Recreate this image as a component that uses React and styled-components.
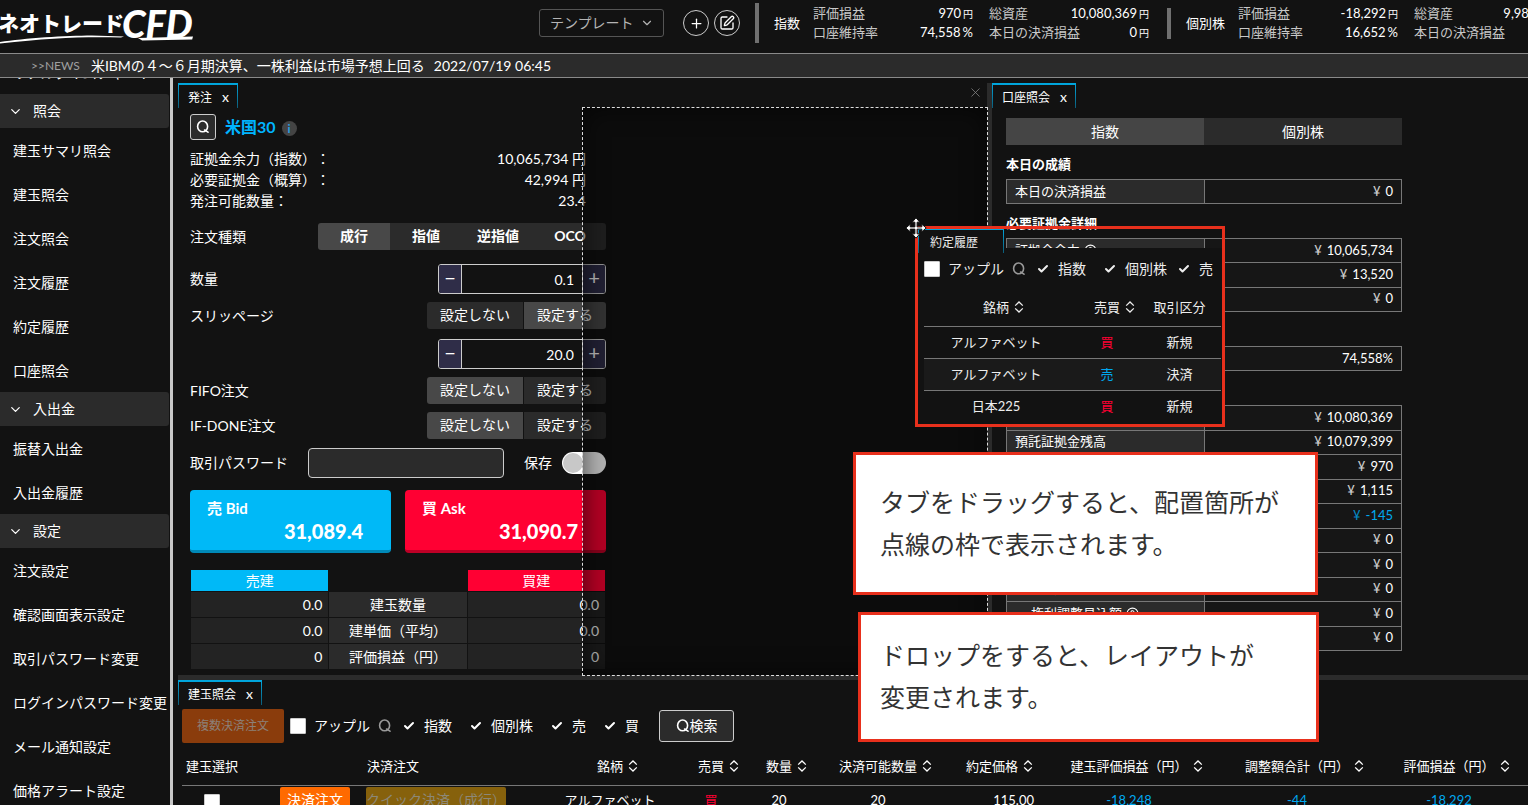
import React from 'react';
import styled, { createGlobalStyle, css } from 'styled-components';
import { Check, ChevronDown, CircleHelp, Plus, SquarePen, X } from 'lucide-react';

const menu = [
    { items: ['リアルタイムチャート'] },
    { title: '照会', items: ['建玉サマリ照会', '建玉照会', '注文照会', '注文履歴', '約定履歴', '口座照会'] },
    { title: '入出金', items: ['振替入出金', '入出金履歴'] },
    {
        title: '設定',
        items: ['注文設定', '確認画面表示設定', '取引パスワード変更', 'ログインパスワード変更', 'メール通知設定', '価格アラート設定'],
    },
];

const accounts = [
    {
        name: '指数',
        bar: 40,
        figures: [
            [['評価損益', '970', '円'], ['口座維持率', '74,558', '%']],
            [['総資産', '10,080,369', '円'], ['本日の決済損益', '0', '円']],
        ],
    },
    {
        name: '個別株',
        bar: 31,
        figures: [
            [['評価損益', '-18,292', '円'], ['口座維持率', '16,652', '%']],
            [['総資産', '9,981,708', '円'], ['本日の決済損益', '0', '円']],
        ],
    },
];

const summary = [
    ['証拠金余力（指数）：', '10,065,734 円'],
    ['必要証拠金（概算）：', '42,994 円'],
    ['発注可能数量：', '23.4'],
];

const holdings = [
    ['0.0', '建玉数量', '0.0'],
    ['0.0', '建単価（平均）', '0.0'],
    ['0', '評価損益（円）', '0'],
];

const accountSections = [
    { title: '本日の成績', height: 25, rows: [{ label: '本日の決済損益', value: '0' }] },
    {
        title: '必要証拠金詳細',
        height: 74,
        rows: [
            { label: '証拠金余力', value: '10,065,734', help: true },
            { label: '必要証拠金', value: '13,520' },
            { label: '発注証拠金', value: '0' },
        ],
    },
    { title: '口座状況', height: 25, rows: [{ label: '口座維持率', value: '74,558%', plain: true }] },
    {
        title: '資産詳細',
        height: 246,
        rows: [
            { label: '総資産', value: '10,080,369' },
            { label: '預託証拠金残高', value: '10,079,399' },
            { label: '評価損益', value: '970' },
            { label: '建玉評価損益', value: '1,115', sub: true },
            { label: '調整額合計', value: '-145', sub: true, minus: true },
            { label: '入金予定額', value: '0' },
            { label: '出金予定額', value: '0' },
            { label: '振替予定額', value: '0' },
            { label: '権利調整見込額', value: '0', sub: true, help: true },
            { label: 'その他', value: '0' },
        ],
    },
];

const positionColumns = [
    { name: '建玉選択', width: 60 },
    { name: '決済注文', width: 302 },
    { name: '銘柄', width: 132, sort: true },
    { name: '売買', width: 70, sort: true },
    { name: '数量', width: 66, sort: true },
    { name: '決済可能数量', width: 132, sort: true },
    { name: '約定価格', width: 96, sort: true },
    { name: '建玉評価損益（円）', width: 178, sort: true },
    { name: '調整額合計（円）', width: 158, sort: true },
    { name: '評価損益（円）', sort: true },
];

const history = [
    ['アルファベット', '買', '新規'],
    ['アルファベット', '売', '決済'],
    ['日本225', '買', '新規'],
];

const SearchIcon = ({ size = 14 }) => (
    <svg width={size} height={size} viewBox="0 0 14 14" fill="none" stroke="currentColor" strokeWidth="1.6" aria-hidden="true">
        <ellipse cx="6.6" cy="6.4" rx="5" ry="5.4" />
        <path d="M8.6 10l3.4 2.2" strokeLinecap="round" />
    </svg>
);

const SortIcon = () => (
    <SortMark width="10" height="12" viewBox="0 0 10 12" fill="none" stroke="currentColor" strokeWidth="1.3" aria-hidden="true">
        <path d="M1.2 4.6L5 1l3.8 3.6M1.2 7.4L5 11l3.8-3.6" />
    </SortMark>
);

const Logo = () => (
    <LogoLink href="#" aria-label="ネオトレードCFD">
        <svg width="200" height="46" viewBox="0 0 200 46" fill="#fff">
            <text x="-2" y="31" fontFamily='"Noto Sans CJK JP", sans-serif' fontWeight="900" fontSize="21">ネオトレード</text>
            <text x="122" y="38" fontFamily="Lato, sans-serif" fontWeight="900" fontStyle="italic" fontSize="38">CFD</text>
            <path d="M0 42C24 38 66 35.5 92 35.4l32 1-3 1.2C86 36.4 50 38 0 43.4z" />
            <path d="M138 38l55-1.4-.8 2.8-50 1z" />
        </svg>
    </LogoLink>
);

const MoveCursor = () => (
    <CursorMark width="22" height="22" viewBox="0 0 22 22" aria-hidden="true">
        <path
            d="M11 .8l3.8 4.4h-2.7v4.7h4.7V7.2l4.4 3.8-4.4 3.8v-2.7h-4.7v4.7h2.7L11 21.2l-3.8-4.4h2.7v-4.7H5.2v2.7L.8 11l4.4-3.8v2.7h4.7V5.2H7.2z"
            fill="#fff"
            stroke="#111"
        />
    </CursorMark>
);

const PanelTab = ({ title }) => (
    <Tabs>
        <Tab>
            {title}
            <TabClose aria-label={`${title}を閉じる`}>x</TabClose>
        </Tab>
    </Tabs>
);

const Filter = ({ label, gap }) => (
    <FilterLabel $gap={gap}>
        <HiddenCheck type="checkbox" defaultChecked />
        <Check size={12} strokeWidth={4} />
        {label}
    </FilterLabel>
);

const SymbolFilter = () => (
    <>
        <SymbolLabel>
            <Box type="checkbox" />
            アップル
        </SymbolLabel>
        <IconButton aria-label="銘柄検索"><SearchIcon /></IconButton>
    </>
);

const Choice = ({ on }) => (
    <Segments $small>
        <Segment $on={!on} $width={96}>設定しない</Segment>
        <Segment $on={on} $width={82}>設定する</Segment>
    </Segments>
);

const Counter = ({ label, value }) => (
    <Stepper>
        <StepButton aria-label={`${label}を減らす`}>−</StepButton>
        <StepInput aria-label={label} defaultValue={value} />
        <StepButton aria-label={`${label}を増やす`}>+</StepButton>
    </Stepper>
);

const OrderPanel = () => (
    <Panel>
        <PanelTab title="発注" />
        <ClosePanel aria-label="閉じる"><X size={15} strokeWidth={1.2} /></ClosePanel>
        <OrderForm onSubmit={(e) => e.preventDefault()}>
            <SymbolRow>
                <SearchButton aria-label="銘柄を選ぶ"><SearchIcon /></SearchButton>
                <SymbolName>米国30</SymbolName>
                <Info>i</Info>
            </SymbolRow>
            <Summary>
                {summary.map(([label, value]) => (
                    <SummaryLine key={label}>
                        <dt>{label}</dt>
                        <dd>{value}</dd>
                    </SummaryLine>
                ))}
            </Summary>
            <FormRow $gap={12}>
                <span>注文種類</span>
                <Segments>
                    {['成行', '指値', '逆指値', 'OCO'].map((type, i) => (
                        <Segment key={type} $on={i === 0} $width={72} $bold>{type}</Segment>
                    ))}
                </Segments>
            </FormRow>
            <FormRow $gap={14}>
                <span>数量</span>
                <Counter label="数量" value="0.1" />
            </FormRow>
            <FormRow $gap={8}>
                <span>スリッページ</span>
                <Choice on />
            </FormRow>
            <FormRow $gap={10} $end>
                <Counter label="スリッページ" value="20.0" />
            </FormRow>
            <FormRow $gap={8}>
                <span>FIFO注文</span>
                <Choice />
            </FormRow>
            <FormRow $gap={8}>
                <span>IF-DONE注文</span>
                <Choice />
            </FormRow>
            <FormRow $gap={9}>
                <label htmlFor="password">取引パスワード</label>
                <PasswordInput id="password" type="password" />
                <SaveLabel>
                    保存
                    <Switch type="checkbox" role="switch" />
                </SaveLabel>
            </FormRow>
            <Prices>
                <PriceButton $color="#00b9f7" $edge="#0089b8">
                    <span>売 Bid</span>
                    <strong>31,089.4</strong>
                </PriceButton>
                <PriceButton $color="#ff0033" $edge="#bd0026">
                    <span>買 Ask</span>
                    <strong>31,090.7</strong>
                </PriceButton>
            </Prices>
            <Holdings>
                <thead>
                    <tr>
                        <HoldingHead $color="#00b9f7">売建</HoldingHead>
                        <td />
                        <HoldingHead $color="#ff0033">買建</HoldingHead>
                    </tr>
                </thead>
                <tbody>
                    {holdings.map(([sell, label, buy]) => (
                        <tr key={label}>
                            <HoldingCell>{sell}</HoldingCell>
                            <HoldingName>{label}</HoldingName>
                            <HoldingCell>{buy}</HoldingCell>
                        </tr>
                    ))}
                </tbody>
            </Holdings>
        </OrderForm>
        <DropZone />
    </Panel>
);

const AccountPanel = () => (
    <Panel>
        <PanelTab title="口座照会" />
        <AccountBody>
            <AccountTabs>
                <AccountTab $on>指数</AccountTab>
                <AccountTab>個別株</AccountTab>
            </AccountTabs>
            {accountSections.map((section) => (
                <section key={section.title}>
                    <SectionTitle>{section.title}</SectionTitle>
                    <AccountTable $height={section.height}>
                        <tbody>
                            {section.rows.map((row) => (
                                <tr key={row.label}>
                                    <AccountName $sub={row.sub}>
                                        {row.label}
                                        {row.help && <CircleHelp size={13} />}
                                    </AccountName>
                                    <AccountValue $minus={row.minus}>
                                        {!row.plain && <Yen>¥</Yen>}
                                        {row.value}
                                    </AccountValue>
                                </tr>
                            ))}
                        </tbody>
                    </AccountTable>
                </section>
            ))}
        </AccountBody>
    </Panel>
);

const PositionPanel = () => (
    <BottomPanel>
        <PanelTab title="建玉照会" />
        <Filters $height={34} $top={4}>
            <BulkButton disabled>複数決済注文</BulkButton>
            <SymbolFilter />
            <Filter label="指数" gap={11} />
            <Filter label="個別株" gap={18} />
            <Filter label="売" gap={18} />
            <Filter label="買" gap={18} />
            <FindButton><SearchIcon />検索</FindButton>
        </Filters>
        <PositionTable>
            <colgroup>
                {positionColumns.map((c) => <col key={c.name} width={c.width} />)}
            </colgroup>
            <thead>
                <tr>
                    {positionColumns.map((c) => (
                        <th key={c.name}>
                            <HeadText>{c.name}{c.sort && <SortIcon />}</HeadText>
                        </th>
                    ))}
                </tr>
            </thead>
            <tbody>
                <tr>
                    <td><Box type="checkbox" aria-label="建玉を選択" /></td>
                    <td>
                        <Actions>
                            <SettleButton>決済注文</SettleButton>
                            <QuickButton disabled>クイック決済（成行）</QuickButton>
                        </Actions>
                    </td>
                    <td>アルファベット</td>
                    <td><Side $buy>買</Side></td>
                    <td>20</td>
                    <td>20</td>
                    <RightCell>115.00</RightCell>
                    <MinusCell>-18,248</MinusCell>
                    <MinusCell>-44</MinusCell>
                    <MinusCell>-18,292</MinusCell>
                </tr>
            </tbody>
        </PositionTable>
    </BottomPanel>
);

const HistoryWindow = () => (
    <Floating>
        <MoveCursor />
        <FloatingTab>約定履歴</FloatingTab>
        <FloatingBody>
            <Filters $height={42}>
                <SymbolFilter />
                <Filter label="指数" gap={11} />
                <Filter label="個別株" gap={18} />
                <Filter label="売" gap={11} />
            </Filters>
            <HistoryTable>
                <colgroup>
                    <col width="144" />
                    <col width="78" />
                    <col />
                </colgroup>
                <thead>
                    <tr>
                        <th><HeadText>銘柄<SortIcon /></HeadText></th>
                        <th><HeadText>売買<SortIcon /></HeadText></th>
                        <th>取引区分</th>
                    </tr>
                </thead>
                <tbody>
                    {history.map(([name, side, kind], i) => (
                        <tr key={i}>
                            <td>{name}</td>
                            <td><Side $buy={side === '買'}>{side}</Side></td>
                            <td>{kind}</td>
                        </tr>
                    ))}
                </tbody>
            </HistoryTable>
        </FloatingBody>
    </Floating>
);

const App = () => (
    <>
        <GlobalStyle />
        <Page>
            <Header>
                <Logo />
                <TemplateBox>
                    <TemplateSelect aria-label="テンプレート">
                        <option>テンプレート</option>
                    </TemplateSelect>
                    <ChevronDown size={14} />
                </TemplateBox>
                <RoundButtons>
                    <RoundButton aria-label="追加"><Plus size={15} /></RoundButton>
                    <RoundButton aria-label="編集"><SquarePen size={16} /></RoundButton>
                </RoundButtons>
                {accounts.map((account) => (
                    <Account key={account.name}>
                        <AccountBar $height={account.bar} />
                        <AccountTitle>{account.name}</AccountTitle>
                        {account.figures.map((group, i) => (
                            <Figures key={i}>
                                {group.map(([label, value, unit]) => (
                                    <Figure key={label}>
                                        <dt>{label}</dt>
                                        <dd>{value}<Unit $small={unit === '円'}>{unit}</Unit></dd>
                                    </Figure>
                                ))}
                            </Figures>
                        ))}
                    </Account>
                ))}
            </Header>
            <News>
                <NewsTag>&gt;&gt;NEWS</NewsTag>
                <span>米IBMの４～６月期決算、一株利益は市場予想上回る</span>
                <time>2022/07/19 06:45</time>
            </News>
            <Main>
                <Sidebar>
                    <SidebarInner>
                        {menu.map((group) => (
                            <div key={group.items[0]}>
                                {group.title && (
                                    <MenuTitle><ChevronDown size={15} />{group.title}</MenuTitle>
                                )}
                                {group.items.map((item) => <MenuLink key={item} href="#">{item}</MenuLink>)}
                            </div>
                        ))}
                    </SidebarInner>
                </Sidebar>
                <Workspace>
                    <TopPanels>
                        <OrderPanel />
                        <Splitter />
                        <AccountPanel />
                    </TopPanels>
                    <Splitter />
                    <PositionPanel />
                </Workspace>
            </Main>
            <HistoryWindow />
            <Callout $left={853} $top={452} $width={465} $pad="26px 0 27px 24px">
                タブをドラッグすると、配置箇所が<br />点線の枠で表示されます。
            </Callout>
            <Callout $left={858} $top={612} $width={461} $pad="19px 0 21px 19px">
                ドロップをすると、レイアウトが<br />変更されます。
            </Callout>
        </Page>
    </>
);

export default App;



const GlobalStyle = createGlobalStyle`
* {
    box-sizing: border-box;
}
body {
    margin: 0;
    background: #121212;
    color: #fff;
    font-family: Lato, "Noto Sans CJK JP", sans-serif;
    font-size: 14px;
    line-height: 20px;
}
button, input, select {
    margin: 0;
    padding: 0;
    border: 0;
    background: none;
    color: inherit;
    font: inherit;
}
a {
    color: inherit;
    text-decoration: none;
}
dl, dd, h3 {
    margin: 0;
}
svg {
    flex: none;
    display: block;
}
`;
const Page = styled.div`
position: relative;
display: flex;
flex-direction: column;
height: 100vh;
overflow: hidden;
`;
const Header = styled.header`
display: flex;
align-items: center;
flex: none;
height: 53px;
padding-bottom: 7px;
overflow: hidden;
white-space: nowrap;
`;
const LogoLink = styled.a`
flex: none;
width: 539px;
`;
const TemplateBox = styled.div`
position: relative;
flex: none;
color: #b4b4b4;
svg {
    position: absolute;
    right: 10px;
    top: 7px;
    pointer-events: none;
}
`;
const TemplateSelect = styled.select`
appearance: none;
display: block;
width: 125px;
height: 28px;
padding: 0 10px;
border: 1px solid #555;
border-radius: 3px;
`;
const RoundButtons = styled.div`
display: flex;
flex: none;
gap: 5px;
margin: 0 15px 0 19px;
`;
const RoundButton = styled.button`
display: flex;
align-items: center;
justify-content: center;
width: 26px;
height: 26px;
border: 1px solid #ccc;
border-radius: 50%;
`;
const Account = styled.div`
display: flex;
align-items: center;
flex: none;
margin-right: 18px;
font-size: 13px;
`;
const AccountBar = styled.span`
width: 4px;
height: ${({ $height }) => $height}px;
background: #707070;
`;
const AccountTitle = styled.span`
margin: 0 13px 0 15px;
`;
const Figures = styled.dl`
width: 160px;
& + & {
    margin-left: 16px;
}
`;
const Figure = styled.div`
display: flex;
justify-content: space-between;
height: 19px;
line-height: 19px;
dt {
    color: #c8c8c8;
}
`;
const Unit = styled.span`
margin-left: 2px;
font-size: ${({ $small }) => ($small ? '10px' : '13px')};
line-height: 10px;
`;
const News = styled.div`
display: flex;
align-items: center;
flex: none;
height: 25px;
padding-left: 31px;
border-top: 1px solid #8a8a8a;
border-bottom: 1px solid #8a8a8a;
background: #2b2b2b;
white-space: nowrap;
time {
    margin-left: 9px;
}
`;
const NewsTag = styled.span`
margin-right: 11px;
color: #a0a0a0;
font-size: 12px;
`;
const Main = styled.div`
display: flex;
flex: 1;
min-height: 0;
`;
const Sidebar = styled.nav`
flex: none;
width: 173px;
border-right: 3px solid #c8c8c8;
overflow: hidden;
white-space: nowrap;
`;
const SidebarInner = styled.div`
margin-top: -28px;
`;
const MenuTitle = styled.div`
display: flex;
align-items: center;
gap: 10px;
height: 34px;
margin-right: 1px;
padding-left: 8px;
border-radius: 0 3px 3px 0;
background: #2b2b2b;
`;
const MenuLink = styled.a`
display: block;
padding: 2px 13px 0;
line-height: 42px;
`;
const Workspace = styled.main`
display: grid;
grid-template-rows: auto 5px minmax(0, 1fr);
flex: 1;
min-width: 0;
padding: 5px 0 0 5px;
`;
const TopPanels = styled.div`
display: grid;
grid-template-columns: minmax(0, 1fr) 5px 536px;
`;
const Splitter = styled.div`
background: #2b2b2b;
`;
const Panel = styled.section`
position: relative;
min-width: 0;
`;
const Tabs = styled.div`
display: flex;
height: 25px;
`;
const tabFrame = css`
border: 1px solid;
border-top: 2px solid;
border-bottom: 0;
border-image: linear-gradient(#00a8e0, #0c5c78) 2 1 0;
font-size: 12px;
`;
const Tab = styled.div`
display: flex;
align-items: center;
gap: 10px;
padding: 2px 8px 0 9px;
${tabFrame}
`;
const TabClose = styled.button`
padding-bottom: 2px;
font-size: 14px;
line-height: 14px;
`;
const ClosePanel = styled.button`
position: absolute;
top: 2px;
right: 4px;
color: #888;
`;
const OrderForm = styled.form`
width: 428px;
padding: 6px 0 5px 12px;
`;
const SymbolRow = styled.div`
display: flex;
align-items: center;
height: 26px;
`;
const SearchButton = styled.button`
display: flex;
align-items: center;
justify-content: center;
width: 26px;
height: 26px;
border: 1px solid #ccc;
border-radius: 3px;
background: #2b2b2b;
`;
const SymbolName = styled.strong`
margin: 0 6px 0 9px;
color: #00b4ff;
font-size: 16px;
`;
const Info = styled.span`
width: 15px;
height: 15px;
margin-top: 3px;
border-radius: 50%;
background: #444;
color: #2a9ee0;
font-size: 12px;
font-weight: 700;
line-height: 15px;
text-align: center;
`;
const Summary = styled.dl`
margin-top: 8px;
text-spacing-trim: space-all;
`;
const SummaryLine = styled.div`
display: flex;
justify-content: space-between;
padding-right: 20px;
line-height: 21px;
`;
const FormRow = styled.div`
display: flex;
align-items: center;
justify-content: ${({ $end }) => ($end ? 'flex-end' : 'space-between')};
margin-top: ${({ $gap }) => $gap}px;
`;
const Segments = styled.div`
display: flex;
gap: ${({ $small }) => ($small ? '1px' : '0')};
height: 27px;
border-radius: 3px;
overflow: hidden;
`;
const Segment = styled.button.attrs({ type: 'button' })`
width: ${({ $width }) => $width}px;
padding-bottom: 1px;
background: ${({ $on }) => ($on ? '#484848' : '#2b2b2b')};
font-weight: ${({ $bold }) => ($bold ? 700 : 400)};
`;
const Stepper = styled.div`
display: flex;
width: 168px;
height: 30px;
border: 1px solid #ccc;
border-radius: 3px;
overflow: hidden;
`;
const StepButton = styled.button.attrs({ type: 'button' })`
width: 22px;
padding-bottom: 4px;
background: #2f2d48;
font-size: 20px;
`;
const StepInput = styled.input`
flex: 1;
min-width: 0;
padding: 2px 8px 0;
border: solid #ccc;
border-width: 0 1px;
text-align: right;
`;
const PasswordInput = styled.input`
width: 196px;
height: 30px;
padding: 0 8px;
border: 1px solid #ccc;
border-radius: 4px;
background: #2b2b2b;
`;
const SaveLabel = styled.label`
display: flex;
align-items: center;
gap: 10px;
`;
const Switch = styled.input`
appearance: none;
width: 44px;
height: 22px;
padding: 1px;
border-radius: 11px;
background: #fff;
&::before {
    content: '';
    display: block;
    width: 20px;
    height: 20px;
    border-radius: 50%;
    background: #c8c8c8;
}
`;
const Prices = styled.div`
display: grid;
grid-template-columns: 1fr 1fr;
gap: 14px;
margin-top: 12px;
`;
const PriceButton = styled.button.attrs({ type: 'button' })`
display: flex;
flex-direction: column;
height: 63px;
padding: 8px 28px 0 17px;
border-bottom: 3px solid ${({ $edge }) => $edge};
border-radius: 4px;
background: ${({ $color }) => $color};
font-size: 15px;
font-weight: 700;
text-align: left;
strong {
    align-self: flex-end;
    font-size: 20px;
    line-height: 26px;
}
`;
const Holdings = styled.table`
width: 100%;
margin-top: 16px;
border-spacing: 1px;
table-layout: fixed;
th, td {
    padding: 0;
    font-weight: 400;
}
`;
const HoldingHead = styled.th`
height: 21px;
background: ${({ $color }) => $color};
`;
const HoldingName = styled.th`
height: 25px;
background: #2b2b2b;
`;
const HoldingCell = styled.td`
&& {
    padding-right: 6px;
}
background: #232323;
text-align: right;
`;
const DropZone = styled.div`
position: absolute;
inset: 24px -1px -1px calc(50% - 1px);
border: 1px dashed #ddd;
background: rgba(0, 0, 0, .3);
box-shadow: inset 0 0 24px rgba(0, 0, 0, .6);
`;
const AccountBody = styled.div`
width: 424px;
padding: 10px 14px 0;
font-size: 13px;
`;
const AccountTabs = styled.div`
display: flex;
height: 27px;
`;
const AccountTab = styled.button`
flex: 1;
background: ${({ $on }) => ($on ? '#454545' : '#2b2b2b')};
font-size: 14px;
`;
const SectionTitle = styled.h3`
padding: 9px 0 5px;
font-size: 13px;
`;
const AccountTable = styled.table`
width: 100%;
height: ${({ $height }) => $height}px;
border-collapse: collapse;
table-layout: fixed;
line-height: 20px;
th, td {
    padding: 0 8px 2px;
    border: 1px solid #777;
}
`;
const AccountName = styled.th`
background: #2b2b2b;
font-weight: 400;
text-align: left;
&& {
    padding-left: ${({ $sub }) => ($sub ? '24px' : '8px')};
}
svg {
    display: inline;
    margin-left: 4px;
    vertical-align: -2px;
}
`;
const AccountValue = styled.td`
background: #161616;
color: ${({ $minus }) => ($minus ? '#00a8f0' : '#fff')};
text-align: right;
`;
const Yen = styled.span`
margin-right: 5px;
opacity: .8;
`;
const BottomPanel = styled(Panel)`
overflow: hidden;
`;
const Filters = styled.div`
display: flex;
align-items: center;
height: ${({ $height }) => $height}px;
margin-top: ${({ $top = 0 }) => $top}px;
padding-left: ${({ $top }) => ($top ? '4px' : '0')};
white-space: nowrap;
`;
const FilterLabel = styled.label`
display: flex;
align-items: center;
gap: 9px;
margin-left: ${({ $gap }) => $gap}px;
`;
const HiddenCheck = styled.input`
position: absolute;
opacity: 0;
`;
const SymbolLabel = styled.label`
display: flex;
align-items: center;
gap: 8px;
`;
const Box = styled.input`
appearance: none;
display: inline-block;
width: 16px;
height: 16px;
border: 1px solid #ccc;
border-radius: 1px;
background: #fff;
vertical-align: middle;
`;
const IconButton = styled.button`
margin-left: 8px;
color: #999;
`;
const BulkButton = styled.button`
width: 102px;
height: 34px;
margin-right: 6px;
border-radius: 2px;
background: #8a3c0c;
color: #8c8078;
font-size: 12px;
`;
const FindButton = styled.button`
display: flex;
align-items: center;
justify-content: center;
width: 75px;
height: 32px;
margin-left: 20px;
border: 1px solid #ccc;
border-radius: 3px;
background: #2b2b2b;
`;
const dataTable = css`
width: 100%;
border-collapse: collapse;
table-layout: fixed;
font-size: 13px;
text-align: center;
white-space: nowrap;
th, td {
    padding: 0;
    font-weight: 400;
}
`;
const PositionTable = styled.table`
margin-left: 4px;
${dataTable}
&& {
    width: calc(100% - 4px);
}
th {
    height: 42px;
    padding-top: 4px;
    border-bottom: 1px solid #777;
}
td {
    height: 30px;
}
th:last-child, td:last-child {
    padding-right: 6px;
}
`;
const HeadText = styled.span`
position: relative;
`;
const SortMark = styled.svg`
position: absolute;
top: 2px;
left: calc(100% + 5px);
`;
const Actions = styled.div`
display: flex;
justify-content: center;
gap: 16px;
`;
const SettleButton = styled.button`
width: 70px;
height: 26px;
border-radius: 2px;
background: #ff6a00;
font-size: 14px;
`;
const QuickButton = styled(SettleButton)`
width: 140px;
background: #86610c;
color: #8c8878;
`;
const Side = styled.span`
color: ${({ $buy }) => ($buy ? '#ff0033' : '#00a8f0')};
`;
const RightCell = styled.td`
&& {
    padding-right: 6px;
}
text-align: right;
`;
const MinusCell = styled.td`
color: #00a8f0;
`;
const Floating = styled.section`
position: absolute;
top: 226px;
left: 915px;
width: 310px;
height: 201px;
border: 3px solid #e8301c;
color: #eee;
`;
const CursorMark = styled.svg`
position: absolute;
top: -12px;
left: -13px;
z-index: 2;
`;
const FloatingTab = styled.div`
position: relative;
z-index: 1;
width: 86px;
height: 24px;
margin-bottom: -5px;
padding: 3px 0 0 11px;
background: #121212;
${tabFrame}
border-top-width: 1px;
`;
const FloatingBody = styled.div`
height: 176px;
padding: 0 1px 0 6px;
background: #121212;
overflow: hidden;
`;
const HistoryTable = styled.table`
${dataTable}
th {
    height: 36px;
    padding-bottom: 2px;
}
td {
    height: 32px;
    border-top: 1px solid #777;
}
th:last-child, td:last-child {
    padding-right: 8px;
}
tbody tr:nth-child(2) {
    background: #1a1a1a;
}
`;
const Callout = styled.aside`
position: absolute;
top: ${({ $top }) => $top}px;
left: ${({ $left }) => $left}px;
width: ${({ $width }) => $width}px;
padding: ${({ $pad }) => $pad};
border: 3px solid #e8301c;
background: #fff;
color: #333;
font-size: 25px;
line-height: 42px;
white-space: nowrap;
`;
